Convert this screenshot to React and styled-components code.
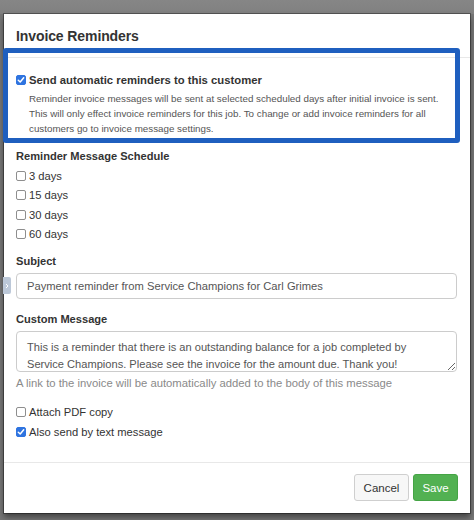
import React from "react";
import styled, { createGlobalStyle } from "styled-components";

const Global = createGlobalStyle`
  html, body { margin: 0; padding: 0; background: #7b7b7b; }
  body { font-family: "Liberation Sans", Arial, Helvetica, sans-serif; }
  * { box-sizing: border-box; }
`;

const Page = styled.div`
  position: relative;
  width: 474px;
  height: 520px;
  overflow: hidden;
  padding: 14px 0 0 4px;
  background: linear-gradient(#868686 0, #808080 14px, #767676 14px);
`;

const Modal = styled.div`
  width: 466px;
  height: 499px;
  background: #fff;
  display: flex;
  flex-direction: column;
  box-shadow: 0 0 0 1px rgba(0, 0, 0, 0.35), 0 4px 6px rgba(0, 0, 0, 0.45);
`;

const Header = styled.div`
  height: 44px;
  display: flex;
  align-items: center;
  padding: 0 12px;
  border-bottom: 1px solid #e8e8e8;
`;

const Title = styled.h4`
  margin: 0;
  font-size: 14px;
  font-weight: bold;
  color: #333;
  letter-spacing: -0.1px;
`;

const Body = styled.div`
  flex: 1;
  padding: 13.5px 13px 0 12px;
  display: flex;
  flex-direction: column;
`;

const CheckRow = styled.label`
  display: flex;
  align-items: center;
  gap: 3px;
  height: ${(p) => p.$h || 19.4}px;
  font-size: ${(p) => (p.$bold ? 11.3 : 11.2)}px;
  font-weight: ${(p) => (p.$bold ? "bold" : "normal")};
  color: #333;
  margin-top: ${(p) => p.$mt || 0}px;
`;

const Box = styled.span`
  width: 10px;
  height: 10px;
  flex: none;
  border-radius: 2px;
  border: 1px solid ${(p) => (p.$on ? "#2f74e0" : "#8e8e8e")};
  background: ${(p) => (p.$on ? "#2f74e0" : "#fff")};
  display: flex;
  align-items: center;
  justify-content: center;
`;

const Description = styled.p`
  margin: 3.5px 0 0 13px;
  font-size: 9.8px;
  line-height: 15px;
  color: #555;
`;

const SectionLabel = styled.div`
  font-size: 11.1px;
  font-weight: bold;
  line-height: 16px;
  color: #333;
  margin-top: ${(p) => p.$mt}px;
`;

const Schedule = styled.div`
  display: flex;
  flex-direction: column;
  margin-top: 2.6px;
`;

const TextInput = styled.input`
  margin-top: 4px;
  width: 100%;
  height: 26px;
  border: 1px solid #ccc;
  border-radius: 4px;
  padding: 0 10px;
  font-family: inherit;
  font-size: 11.2px;
  color: #555;
  outline: none;
`;

const TextArea = styled.textarea`
  margin-top: 4px;
  width: 100%;
  height: 41px;
  border: 1px solid #ccc;
  border-radius: 4px;
  padding: 7px 10px 0;
  font-family: inherit;
  font-size: 11.1px;
  line-height: 17px;
  color: #555;
  resize: vertical;
  outline: none;
  overflow: hidden;
`;

const Help = styled.div`
  margin-top: 3px;
  font-size: 11.3px;
  line-height: 16px;
  color: #8a8a8a;
`;

const Footer = styled.div`
  height: 51px;
  border-top: 1px solid #e8e8e8;
  display: flex;
  justify-content: flex-end;
  align-items: flex-start;
  gap: 4px;
  padding: 11px 12px 0;
`;

const Button = styled.button`
  width: ${(p) => p.$w}px;
  height: 27px;
  border-radius: 3px;
  font-family: inherit;
  font-size: 11.5px;
  padding: 0;
  cursor: pointer;
  border: 1px solid ${(p) => (p.$primary ? "#45a445" : "#cfcfcf")};
  background: ${(p) => (p.$primary ? "#52b152" : "#f7f7f7")};
  color: ${(p) => (p.$primary ? "#fff" : "#333")};
`;

const Highlight = styled.div`
  position: absolute;
  left: 3px;
  top: 48px;
  width: 457px;
  height: 95px;
  border: 5px solid #1f5fbf;
  border-radius: 3px;
  pointer-events: none;
`;

const SideTab = styled.div`
  position: absolute;
  left: 3px;
  top: 277px;
  width: 8px;
  height: 17px;
  background: #bcc8d8;
  border-radius: 0 2px 2px 0;
  display: flex;
  align-items: center;
  justify-content: center;
`;

function Check({ on }) {
  return (
    <Box $on={on}>
      {on && (
        <svg width="8" height="8" viewBox="0 0 8 8">
          <path d="M1.3 4.2 L3.2 6 L6.7 1.8" fill="none" stroke="#fff" strokeWidth="1.5" strokeLinecap="round" strokeLinejoin="round" />
        </svg>
      )}
    </Box>
  );
}

const days = ["3 days", "15 days", "30 days", "60 days"];

export default function App() {
  return (
    <>
      <Global />
      <Page>
        <Modal>
          <Header>
            <Title>Invoice Reminders</Title>
          </Header>
          <Body>
            <CheckRow $bold $h={16}>
              <Check on />
              Send automatic reminders to this customer
            </CheckRow>
            <Description>
              Reminder invoice messages will be sent at selected scheduled days after initial invoice is sent.
              <br />
              This will only effect invoice reminders for this job. To change or add invoice reminders for all
              <br />
              customers go to invoice message settings.
            </Description>
            <SectionLabel $mt={11.5}>Reminder Message Schedule</SectionLabel>
            <Schedule>
              {days.map((d) => (
                <CheckRow key={d}>
                  <Check />
                  {d}
                </CheckRow>
              ))}
            </Schedule>
            <SectionLabel $mt={9}>Subject</SectionLabel>
            <TextInput readOnly defaultValue="Payment reminder from Service Champions for Carl Grimes" />
            <SectionLabel $mt={12}>Custom Message</SectionLabel>
            <TextArea
              readOnly
              defaultValue="This is a reminder that there is an outstanding balance for a job completed by Service Champions. Please see the invoice for the amount due. Thank you!"
            />
            <Help>A link to the invoice will be automatically added to the body of this message</Help>
            <CheckRow $h={20} $mt={11}>
              <Check />
              Attach PDF copy
            </CheckRow>
            <CheckRow $h={20}>
              <Check on />
              Also send by text message
            </CheckRow>
          </Body>
          <Footer>
            <Button $w={55}>Cancel</Button>
            <Button $w={45} $primary>Save</Button>
          </Footer>
        </Modal>
        <Highlight />
        <SideTab>
          <svg width="4" height="6" viewBox="0 0 4 6">
            <path d="M1 1 L3 3 L1 5" fill="none" stroke="#fff" strokeWidth="1" />
          </svg>
        </SideTab>
      </Page>
    </>
  );
}
